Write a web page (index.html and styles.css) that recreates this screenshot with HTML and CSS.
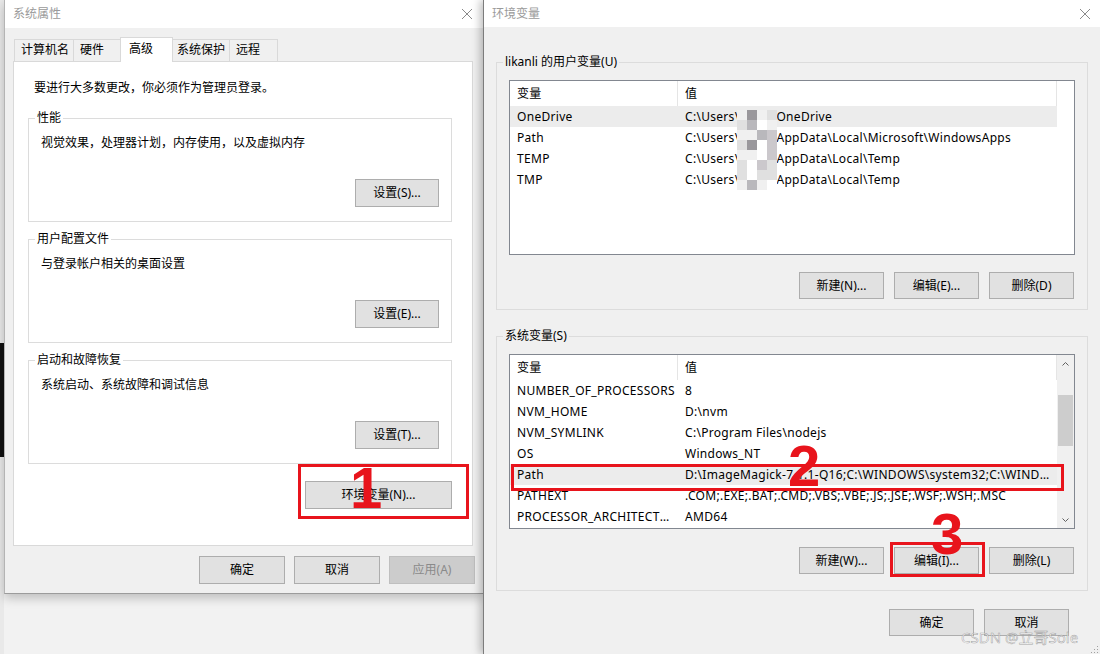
FILE: index.html
```html
<!DOCTYPE html>
<html lang="zh-CN">

<head>
    <meta charset="UTF-8">
    <meta name="viewport" content="width=device-width, initial-scale=1.0">
    <title>系统属性 - 环境变量</title>
    <link rel="stylesheet" href="styles.css">
</head>

<body>
    <div class="desk-edge">
        <div class="desk-dark"></div>
    </div>

    <!-- 系统属性 -->
    <section class="dialog sys-props">
        <header class="titlebar">
            <span class="title">系统属性</span>
            <svg class="close" width="10" height="10" viewBox="0 0 10 10">
                <path d="M0 0L10 10M10 0L0 10" stroke="#8a8a8a" stroke-width="1" fill="none" />
            </svg>
        </header>

        <div class="tabs">
            <span class="tab">计算机名</span>
            <span class="tab">硬件</span>
            <span class="tab active">高级</span>
            <span class="tab">系统保护</span>
            <span class="tab">远程</span>
        </div>

        <div class="tab-panel">
            <p class="notice">要进行大多数更改，你必须作为管理员登录。</p>

            <fieldset class="group">
                <legend>性能</legend>
                <p class="desc">视觉效果，处理器计划，内存使用，以及虚拟内存</p>
                <div class="group-actions"><button class="btn">设置(S)...</button></div>
            </fieldset>

            <fieldset class="group">
                <legend>用户配置文件</legend>
                <p class="desc">与登录帐户相关的桌面设置</p>
                <div class="group-actions"><button class="btn">设置(E)...</button></div>
            </fieldset>

            <fieldset class="group">
                <legend>启动和故障恢复</legend>
                <p class="desc">系统启动、系统故障和调试信息</p>
                <div class="group-actions"><button class="btn">设置(T)...</button></div>
            </fieldset>

            <div class="env-row">
                <button class="btn btn-env">环境变量(N)...</button>
            </div>
        </div>

        <footer class="dlg-footer">
            <button class="btn">确定</button>
            <button class="btn">取消</button>
            <button class="btn" disabled>应用(A)</button>
        </footer>

        <!-- annotation -->
        <div class="mark-box mark-box-1"></div>
        <span class="mark-num mark-num-1">1</span>
    </section>

    <!-- 环境变量 -->
    <section class="dialog env-vars">
        <header class="titlebar">
            <span class="title">环境变量</span>
            <svg class="close" width="10" height="10" viewBox="0 0 10 10">
                <path d="M0 0L10 10M10 0L0 10" stroke="#8a8a8a" stroke-width="1" fill="none" />
            </svg>
        </header>

        <div class="env-body">
            <fieldset class="group var-group">
                <legend>likanli 的用户变量(U)</legend>
                <div class="listview">
                    <div class="lv-main">
                        <div class="lv-head">
                            <span class="cell">变量</span>
                            <span class="cell">值</span>
                        </div>
                        <div class="lv-row selected">
                            <span class="cell">OneDrive</span>
                            <span class="cell">C:\Users\<i class="hidden-name"></i>OneDrive</span>
                        </div>
                        <div class="lv-row">
                            <span class="cell">Path</span>
                            <span class="cell">C:\Users\<i class="hidden-name"></i>AppData\Local\Microsoft\WindowsApps</span>
                        </div>
                        <div class="lv-row">
                            <span class="cell">TEMP</span>
                            <span class="cell">C:\Users\<i class="hidden-name"></i>AppData\Local\Temp</span>
                        </div>
                        <div class="lv-row">
                            <span class="cell">TMP</span>
                            <span class="cell">C:\Users\<i class="hidden-name"></i>AppData\Local\Temp</span>
                        </div>
                    </div>
                    <div class="lv-side"></div>

                    <!-- 打码的用户名 -->
                    <div class="mosaic">
                        <i class="t1"></i><i class="t5"></i><i class="t1"></i><i class="t2"></i>
                        <i class="t2"></i><i class="t4"></i><i class="t0"></i><i class="t1"></i>
                        <i class="t1"></i><i class="t1"></i><i class="t4"></i><i class="t3"></i>
                        <i class="t2"></i><i class="t5"></i><i class="t0"></i><i class="t3"></i>
                        <i class="t1"></i><i class="t1"></i><i class="t0"></i><i class="t3"></i>
                        <i class="t2"></i><i class="t0"></i><i class="t3"></i><i class="t2"></i>
                        <i class="t2"></i><i class="t0"></i><i class="t2"></i><i class="t2"></i>
                        <i class="t1"></i><i class="t4"></i><i class="t1"></i><i class="t0"></i>
                    </div>
                </div>
                <div class="group-buttons">
                    <button class="btn">新建(N)...</button>
                    <button class="btn">编辑(E)...</button>
                    <button class="btn">删除(D)</button>
                </div>
            </fieldset>

            <fieldset class="group var-group sys-group">
                <legend>系统变量(S)</legend>
                <div class="listview">
                    <div class="lv-main">
                        <div class="lv-head">
                            <span class="cell">变量</span>
                            <span class="cell">值</span>
                        </div>
                        <div class="lv-row">
                            <span class="cell">NUMBER_OF_PROCESSORS</span>
                            <span class="cell">8</span>
                        </div>
                        <div class="lv-row">
                            <span class="cell">NVM_HOME</span>
                            <span class="cell">D:\nvm</span>
                        </div>
                        <div class="lv-row">
                            <span class="cell">NVM_SYMLINK</span>
                            <span class="cell">C:\Program Files\nodejs</span>
                        </div>
                        <div class="lv-row">
                            <span class="cell">OS</span>
                            <span class="cell">Windows_NT</span>
                        </div>
                        <div class="lv-row selected">
                            <span class="cell">Path</span>
                            <span class="cell">D:\ImageMagick-7.1.1-Q16;C:\WINDOWS\system32;C:\WINDOWS;C:\WINDOWS\System32\Wbem</span>
                        </div>
                        <div class="lv-row">
                            <span class="cell">PATHEXT</span>
                            <span class="cell">.COM;.EXE;.BAT;.CMD;.VBS;.VBE;.JS;.JSE;.WSF;.WSH;.MSC</span>
                        </div>
                        <div class="lv-row">
                            <span class="cell">PROCESSOR_ARCHITECTURE</span>
                            <span class="cell">AMD64</span>
                        </div>
                    </div>
                    <div class="lv-side scrollbar">
                        <div class="sb-arrow">
                            <svg width="7" height="4" viewBox="0 0 7 4">
                                <path d="M0.5 3.5L3.5 0.5L6.5 3.5" fill="none" stroke="#606060" />
                            </svg>
                        </div>
                        <div class="sb-thumb"></div>
                        <div class="sb-arrow sb-down">
                            <svg width="7" height="4" viewBox="0 0 7 4">
                                <path d="M0.5 0.5L3.5 3.5L6.5 0.5" fill="none" stroke="#606060" />
                            </svg>
                        </div>
                    </div>
                </div>
                <div class="group-buttons">
                    <button class="btn">新建(W)...</button>
                    <button class="btn">编辑(I)...</button>
                    <button class="btn">删除(L)</button>
                </div>
            </fieldset>

            <footer class="dlg-footer">
                <button class="btn">确定</button>
                <button class="btn">取消</button>
            </footer>
        </div>

        <!-- annotations -->
        <div class="mark-box mark-box-2"></div>
        <span class="mark-num mark-num-2">2</span>
        <div class="mark-box mark-box-3"></div>
        <span class="mark-num mark-num-3">3</span>

        <span class="watermark">CSDN @立哥Sole</span>

        <svg class="grip" width="8" height="8" viewBox="0 0 8 8">
            <path d="M6 1h1v1h-1zM3 4h1v1h-1zM6 4h1v1h-1zM0 7h1v1h-1zM3 7h1v1h-1zM6 7h1v1h-1z" fill="#a0a0a0" />
        </svg>
    </section>
</body>

</html>
```

FILE: styles.css
```css
:root {
    --dlg-bg: #f0f0f0;
    /* dialog face */
    --btn-bg: #e1e1e1;
    --btn-border: #adadad;
    --group-border: #dcdcdc;
    --list-border: #828790;
    --row-selected: #ececec;
    --mark-red: #e8141c;
    /* annotation red */
}

* {
    box-sizing: border-box;
    margin: 0;
    padding: 0;
}

body {
    width: 1100px;
    height: 654px;
    overflow: hidden;
    display: flex;
    align-items: flex-start;
    background-color: #f2f2f2;
    font-family: "Noto Sans", "Noto Sans CJK SC", sans-serif;
    font-size: 12px;
    line-height: 16px;
    color: #000;
}

/* strip of desktop visible on the far left */
.desk-edge {
    width: 4px;
    height: 654px;
    flex-shrink: 0;
    background-color: #e9e9e9;
}

.desk-dark {
    margin-top: 343px;
    height: 114px;
    background-color: #111;
}

.dialog {
    position: relative;
    background-color: var(--dlg-bg);
}

.titlebar {
    display: flex;
    justify-content: space-between;
    align-items: center;
    background-color: #fff;
    padding: 0 11px 0 8px;
}

.titlebar .title {
    color: #9a9a9a;
}

.btn {
    height: 28px;
    width: 84px;
    background-color: var(--btn-bg);
    border: 1px solid var(--btn-border);
    font: inherit;
    color: #000;
}

.btn:disabled {
    background-color: #cccccc;
    border-color: #bfbfbf;
    color: #8a8a8a;
}

.group {
    border: 1px solid var(--group-border);
}

.group legend {
    margin-left: -6px;
    padding: 0 2px;
    line-height: 16px;
}

/* ---------- 系统属性 ---------- */

.sys-props {
    width: 479px;
    height: 594px;
    flex-shrink: 0;
    border-left: 1px solid #b4b4b4;
    border-bottom: 1px solid #9c9c9c;
    box-shadow: 0 4px 10px rgba(0, 0, 0, 0.22);
    z-index: 1;
}

.sys-props .titlebar {
    height: 28px;
}

.tabs {
    display: flex;
    align-items: flex-end;
    height: 24px;
    margin: 9px 0 0 9px;
    position: relative;
    z-index: 1;
}

.tab {
    flex: none;
    height: 22px;
    min-width: 49px;
    padding: 0 4px 0 6px;
    line-height: 20px;
    border: 1px solid #d9d9d9;
    border-bottom: none;
    background-color: var(--dlg-bg);
}

.tab+.tab {
    margin-left: -1px;
}

.tab.active {
    height: 25px;
    min-width: 53px;
    line-height: 22px;
    margin: 0 -2px -1px;
    padding: 0 8px;
    background-color: #fff;
    position: relative;
}

.tab-panel {
    height: 485px;
    margin: 0 10px 0 8px;
    background-color: #fff;
    border: 1px solid #d9d9d9;
    padding: 0 20px 0 14px;
}

.notice {
    margin: 18px 0 0 6px;
}

.tab-panel .group {
    margin-top: 14px;
    padding: 0 12px 14px 12px;
}

.tab-panel .group+.group {
    margin-top: 9px;
}

.desc {
    margin-top: 9px;
}

.group-actions {
    display: flex;
    justify-content: flex-end;
    margin-top: 28px;
}

.env-row {
    display: flex;
    justify-content: flex-end;
    margin-top: 17px;
}

.btn-env {
    width: 147px;
}

.dlg-footer {
    display: flex;
    justify-content: flex-end;
    gap: 9px;
    padding: 10px 8px 0 0;
}

.sys-props .dlg-footer .btn {
    width: 86px;
}

/* ---------- 环境变量 ---------- */

.env-vars {
    flex: 1;
    height: 654px;
    border-left: 1px solid #7c7c7c;
    box-shadow: -3px 0 8px rgba(0, 0, 0, 0.25);
    z-index: 2;
}

.env-vars .titlebar {
    height: 27px;
    padding-right: 10px;
}

.env-body {
    padding: 27px 12px 0 12px;
}

.var-group {
    padding: 10px 12px 10px 12px;
}

.sys-group {
    margin-top: 18px;
    padding-bottom: 16px;
}

.listview {
    position: relative;
    display: flex;
    height: 175px;
    background-color: #fff;
    border: 1px solid var(--list-border);
}

.lv-main {
    width: 547px;
}

.lv-side {
    flex: 1;
}

.lv-head,
.lv-row {
    display: grid;
    grid-template-columns: 168px 379px;
}

.lv-head {
    height: 25px;
    line-height: 25px;
}

.lv-head .cell {
    border-right: 1px solid #e5e5e5;
}

.lv-row {
    height: 21px;
    line-height: 21px;
}

.lv-row.selected {
    background-color: var(--row-selected);
}

.cell {
    padding-left: 7px;
    white-space: nowrap;
    overflow: hidden;
    text-overflow: ellipsis;
    letter-spacing: 0.3px;
}

.lv-row .cell+.cell {
    padding-right: 6px;
}

.hidden-name {
    display: inline-block;
    width: 37px;
}

.mosaic {
    position: absolute;
    left: 227px;
    top: 29px;
    width: 40px;
    display: grid;
    grid-template-columns: repeat(4, 10px);
    grid-auto-rows: 10px;
}

.mosaic .t0 { background-color: #ffffff; }
.mosaic .t1 { background-color: #f0f0f0; }
.mosaic .t2 { background-color: #e0e0e0; }
.mosaic .t3 { background-color: #cbc8cc; }
.mosaic .t4 { background-color: #b9b8bc; }
.mosaic .t5 { background-color: #9a989c; }

.scrollbar {
    display: flex;
    flex-direction: column;
    background-color: var(--dlg-bg);
}

.sb-arrow {
    height: 17px;
    display: flex;
    align-items: center;
    justify-content: center;
}

.sb-thumb {
    height: 51px;
    margin: 23px 1px 0;
    background-color: #cdcdcd;
}

.sb-down {
    margin-top: auto;
}

.group-buttons {
    display: flex;
    justify-content: flex-end;
    gap: 10px;
    margin-top: 17px;
    padding-right: 1px;
}

.sys-group .group-buttons {
    margin-top: 18px;
}

.group-buttons .btn,
.env-vars .dlg-footer .btn {
    width: 85px;
    height: 27px;
}

.env-vars .dlg-footer {
    gap: 10px;
    padding: 18px 19px 0 0;
}

/* ---------- annotations drawn over the screenshot ---------- */

.mark-box {
    position: absolute;
    border: 3px solid var(--mark-red);
}

.mark-num {
    position: absolute;
    font-family: "Liberation Sans", sans-serif;
    font-weight: bold;
    font-size: 58px;
    line-height: 58px;
    color: var(--mark-red);
}

.mark-box-1 {
    left: 293px;
    top: 464px;
    width: 171px;
    height: 55px;
}

.mark-num-1 {
    left: 345px;
    top: 459px;
}

.mark-box-2 {
    left: 27px;
    top: 464px;
    width: 553px;
    height: 27px;
}

.mark-num-2 {
    left: 304px;
    top: 437px;
}

.mark-box-3 {
    left: 406px;
    top: 542px;
    width: 95px;
    height: 35px;
}

.mark-num-3 {
    left: 447px;
    top: 505px;
}

.watermark {
    position: absolute;
    left: 477px;
    top: 627px;
    font-size: 15px;
    line-height: 20px;
    color: rgba(255, 255, 255, 0.8);
    -webkit-text-stroke: 0.5px rgba(80, 80, 80, 0.55);
}

.grip {
    position: absolute;
    right: 1px;
    bottom: 1px;
}
```
